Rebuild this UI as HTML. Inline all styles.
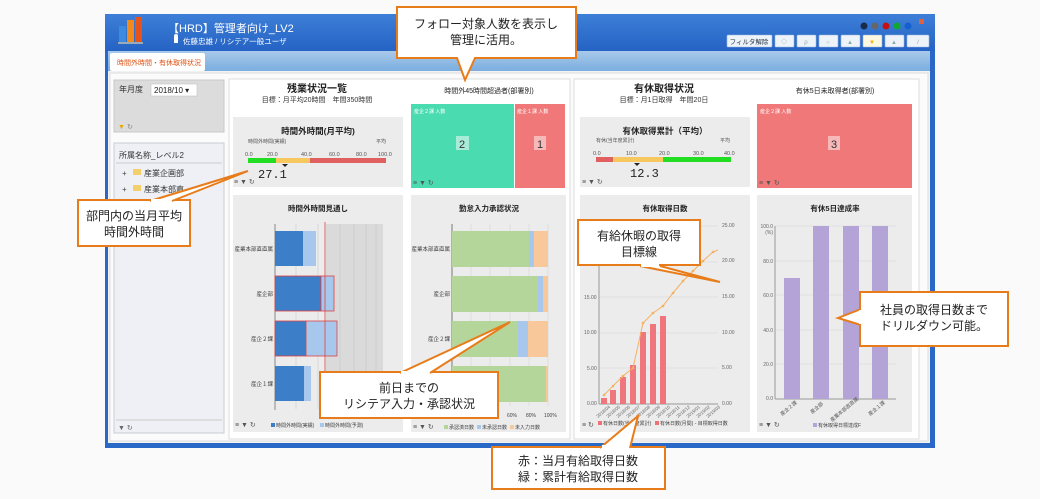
<!DOCTYPE html>
<html><head><meta charset="utf-8"><style>
html,body{margin:0;padding:0;background:#fafafa;width:1040px;height:499px;overflow:hidden}
svg{display:block;font-family:"Liberation Sans","Noto Sans CJK JP",sans-serif}
</style></head><body>
<svg width="1040" height="499" viewBox="0 0 1040 499" xmlns="http://www.w3.org/2000/svg">
<defs>
<linearGradient id="tb" x1="0" y1="0" x2="0" y2="1"><stop offset="0" stop-color="#3d7fd8"/><stop offset="1" stop-color="#2563c4"/></linearGradient>
<linearGradient id="tab" x1="0" y1="0" x2="0" y2="1"><stop offset="0" stop-color="#a9c9ea"/><stop offset="1" stop-color="#7aaedf"/></linearGradient>
</defs>
<rect width="1040" height="499" fill="#fafafa"/>
<!-- window -->
<rect x="105" y="14" width="830" height="434" fill="#2a68c8"/>
<rect x="105" y="14" width="830" height="37" fill="url(#tb)"/>
<!-- logo -->
<rect x="119" y="26" width="7" height="16" fill="#3b8be0"/>
<rect x="127" y="20" width="7" height="22" fill="#f28a1e"/>
<rect x="135" y="17" width="7" height="25" fill="#e8531a"/>
<rect x="118" y="42" width="25" height="2" fill="#9ab"/>
<text x="168" y="32" font-size="11" fill="#fff">【HRD】管理者向け_LV2</text>
<rect x="174" y="37" width="4" height="6" fill="#fff"/><circle cx="176" cy="36" r="2" fill="#fff"/>
<text x="183" y="44" font-size="7.5" fill="#fff">佐藤忠雄 / リシテア一般ユーザ</text>
<!-- dots -->
<circle cx="864" cy="26" r="3.5" fill="#1a2a4a"/>
<circle cx="875" cy="26" r="3.5" fill="#666"/>
<circle cx="886" cy="26" r="3.5" fill="#c81010"/>
<circle cx="897" cy="26" r="3.5" fill="#10a830"/>
<circle cx="908" cy="26" r="3.5" fill="#1560d0"/>
<rect x="919" y="19" width="5" height="5" fill="#e06040"/>
<!-- buttons -->
<g fill="#eef3fa" stroke="#9ab8dc" stroke-width="0.6">
<rect x="727" y="35" width="45" height="12" rx="1"/>
<rect x="775" y="35" width="19" height="12" rx="1"/>
<rect x="797" y="35" width="19" height="12" rx="1"/>
<rect x="819" y="35" width="19" height="12" rx="1"/>
<rect x="841" y="35" width="19" height="12" rx="1"/>
<rect x="863" y="35" width="19" height="12" rx="1" fill="#fff8e0"/>
<rect x="885" y="35" width="19" height="12" rx="1"/>
<rect x="907" y="35" width="22" height="12" rx="1"/>
</g>
<text x="749" y="44" font-size="6.5" fill="#234" text-anchor="middle">フィルタ解除</text>
<g fill="#8aa" font-size="6" text-anchor="middle"><text x="784" y="44">◇</text><text x="806" y="44">ρ</text><text x="828" y="44">○</text><text x="850" y="44">▲</text><text x="894" y="44">▲</text><text x="918" y="44">/</text></g>
<text x="872" y="44" font-size="6" fill="#f0b000" text-anchor="middle">▼</text>
<!-- tab strip -->
<rect x="108" y="51" width="822" height="20" fill="url(#tab)"/>
<rect x="110" y="53" width="95" height="18" fill="#fff" rx="2"/>
<text x="117" y="65" font-size="7" fill="#e05010">時間外時間・有休取得状況</text>
<!-- content bg -->
<rect x="108" y="71" width="822" height="372" fill="#f2f2f2"/>
<rect x="110" y="73" width="818" height="368" fill="#fbfbfb" stroke="#ddd"/>
<!-- left panels -->
<rect x="114" y="80" width="110" height="52" fill="#dcdcdc" stroke="#c8c8c8"/>
<text x="119" y="92" font-size="8" fill="#333">年月度</text>
<rect x="151" y="84" width="46" height="12" fill="#fff" stroke="#bbb" stroke-width="0.5"/>
<text x="154" y="93" font-size="8" fill="#222">2018/10 ▾</text>
<text x="118" y="129" font-size="7" fill="#e8a800">▼</text><text x="127" y="129" font-size="7" fill="#888">↻</text>
<rect x="114" y="143" width="110" height="290" fill="#eef0f5" stroke="#c8ccd4"/>
<text x="119" y="158" font-size="8" fill="#333">所属名称_レベル2</text>
<line x1="116" y1="163" x2="222" y2="163" stroke="#ccc"/>
<text x="122" y="176" font-size="8" fill="#444">+</text><rect x="133" y="169" width="8" height="6" fill="#f3cf6c"/><text x="144" y="176" font-size="8" fill="#333">産業企画部</text>
<text x="122" y="192" font-size="8" fill="#444">+</text><rect x="133" y="185" width="8" height="6" fill="#f3cf6c"/><text x="144" y="192" font-size="8" fill="#333">産業本部直</text>
<line x1="116" y1="420" x2="222" y2="420" stroke="#ccc"/>
<text x="118" y="430" font-size="7" fill="#666">▼ ↻</text>
<!-- main panels -->
<rect x="229" y="79" width="341" height="360" fill="#fff" stroke="#ddd"/>
<rect x="574" y="79" width="345" height="360" fill="#fff" stroke="#ddd"/>
<text x="317" y="92" font-size="10" font-weight="bold" fill="#222" text-anchor="middle">残業状況一覧</text>
<text x="317" y="102" font-size="7" fill="#333" text-anchor="middle">目標：月平均20時間　年間350時間</text>
<text x="489" y="93" font-size="7" fill="#222" text-anchor="middle">時間外45時間超過者(部署別)</text>
<text x="664" y="92" font-size="10" font-weight="bold" fill="#222" text-anchor="middle">有休取得状況</text>
<text x="664" y="102" font-size="7" fill="#333" text-anchor="middle">目標：月1日取得　年間20日</text>
<text x="835" y="93" font-size="7" fill="#222" text-anchor="middle">有休5日未取得者(部署別)</text>
<!-- gauge 1 -->
<rect x="233" y="117" width="170" height="70" fill="#ececec"/>
<text x="318" y="134" font-size="8.5" font-weight="bold" fill="#222" text-anchor="middle">時間外時間(月平均)</text>
<text x="248" y="143" font-size="5" fill="#555">時間外時間(実績)</text><text x="376" y="143" font-size="5" fill="#555">平均</text>
<g font-size="5.5" fill="#555"><text x="245" y="156">0.0</text><text x="267" y="156">20.0</text><text x="301" y="156">40.0</text><text x="329" y="156">60.0</text><text x="356" y="156">80.0</text><text x="378" y="156">100.0</text></g>
<rect x="248" y="158" width="28" height="5" fill="#22dd22"/><rect x="276" y="158" width="34" height="5" fill="#f8c860"/><rect x="310" y="158" width="76" height="5" fill="#e06060"/>
<path d="M282 164 h6 l-3 3z" fill="#222"/>
<text x="258" y="178" font-size="12" fill="#222" font-family="Liberation Mono,monospace">27.1</text>
<text x="234" y="184" font-size="7" fill="#555">≡ ▼ ↻</text>
<!-- treemap 1 -->
<rect x="411" y="104" width="103" height="84" fill="#4adbb0"/>
<rect x="515" y="104" width="50" height="84" fill="#f07878"/>
<text x="414" y="113" font-size="5" fill="#fff">産企２課 人数</text><text x="517" y="113" font-size="5" fill="#fff">産企１課 人数</text>
<rect x="456" y="136" width="13" height="14" fill="#a8ecd8"/><text x="462" y="148" font-size="11" fill="#333" text-anchor="middle">2</text>
<rect x="534" y="136" width="12" height="14" fill="#f6b8b8"/><text x="540" y="148" font-size="11" fill="#333" text-anchor="middle">1</text>
<text x="413" y="185" font-size="7" fill="#555">≡ ▼ ↻</text>
<!-- gauge 2 -->
<rect x="580" y="117" width="170" height="70" fill="#ececec"/>
<text x="665" y="134" font-size="8.5" font-weight="bold" fill="#222" text-anchor="middle">有休取得累計（平均）</text>
<text x="596" y="142" font-size="5" fill="#555">有休(当年度累計)</text><text x="720" y="142" font-size="5" fill="#555">平均</text>
<g font-size="5.5" fill="#555"><text x="593" y="155">0.0</text><text x="626" y="155">10.0</text><text x="659" y="155">20.0</text><text x="693" y="155">30.0</text><text x="724" y="155">40.0</text></g>
<rect x="596" y="157" width="17" height="5" fill="#e06060"/><rect x="613" y="157" width="50" height="5" fill="#f8c860"/><rect x="663" y="157" width="68" height="5" fill="#22dd22"/>
<path d="M634 163 h6 l-3 3z" fill="#222"/>
<text x="630" y="177" font-size="12" fill="#222" font-family="Liberation Mono,monospace">12.3</text>
<text x="582" y="184" font-size="7" fill="#555">≡ ▼ ↻</text>
<!-- treemap 2 -->
<rect x="757" y="104" width="155" height="84" fill="#f07878"/>
<text x="760" y="113" font-size="5" fill="#fff">産企２課 人数</text>
<rect x="828" y="136" width="12" height="14" fill="#f6b8b8"/><text x="834" y="148" font-size="11" fill="#333" text-anchor="middle">3</text>
<text x="759" y="185" font-size="7" fill="#555">≡ ▼ ↻</text>
<!-- lower cards -->
<rect x="233" y="195" width="170" height="237" fill="#ececec"/>
<rect x="411" y="195" width="155" height="237" fill="#ececec"/>
<rect x="580" y="195" width="170" height="237" fill="#ececec"/>
<rect x="757" y="195" width="155" height="237" fill="#ececec"/>
<!-- chart 1 -->
<text x="318" y="211" font-size="7.5" font-weight="bold" fill="#222" text-anchor="middle">時間外時間見通し</text>
<rect x="326" y="224" width="57" height="185" fill="#dadada"/>
<g stroke="#c4c4c4" stroke-width="0.5"><line x1="296" y1="224" x2="296" y2="409"/><line x1="318" y1="224" x2="318" y2="409"/><line x1="340" y1="224" x2="340" y2="409"/><line x1="354" y1="224" x2="354" y2="409"/><line x1="366" y1="224" x2="366" y2="409"/><line x1="376" y1="224" x2="376" y2="409"/></g>
<line x1="275" y1="224" x2="275" y2="410" stroke="#888"/>
<rect x="275" y="231" width="28" height="35" fill="#3d7ec8"/><rect x="303" y="231" width="13" height="35" fill="#a7c8ec"/>
<rect x="275" y="276" width="46" height="35" fill="#3d7ec8" stroke="#e04040" stroke-width="0.8"/><rect x="321" y="276" width="13" height="35" fill="#a7c8ec" stroke="#e04040" stroke-width="0.8"/>
<rect x="275" y="321" width="31" height="35" fill="#3d7ec8" stroke="#e04040" stroke-width="0.8"/><rect x="306" y="321" width="31" height="35" fill="#a7c8ec" stroke="#e04040" stroke-width="0.8"/>
<rect x="275" y="366" width="29" height="35" fill="#3d7ec8"/><rect x="304" y="366" width="7" height="35" fill="#a7c8ec"/>
<line x1="325" y1="222" x2="325" y2="410" stroke="#e04040" stroke-width="0.8"/>
<g font-size="5.5" fill="#444" text-anchor="end"><text x="273" y="251">産業本部直直属</text><text x="273" y="296">産企部</text><text x="273" y="341">産企２課</text><text x="273" y="386">産企１課</text></g>
<text x="235" y="427" font-size="7" fill="#555">≡ ▼ ↻</text>
<rect x="271" y="423" width="4" height="4" fill="#3d7ec8"/><text x="276" y="427" font-size="5" fill="#444">時間外時間(実績)</text>
<rect x="320" y="423" width="4" height="4" fill="#a7c8ec"/><text x="325" y="427" font-size="5" fill="#444">時間外時間(予測)</text>
<!-- chart 2 -->
<text x="489" y="211" font-size="7.5" font-weight="bold" fill="#222" text-anchor="middle">勤怠入力承認状況</text>
<g stroke="#d0d0d0" stroke-width="0.5"><line x1="471" y1="224" x2="471" y2="406"/><line x1="490" y1="224" x2="490" y2="406"/><line x1="510" y1="224" x2="510" y2="406"/><line x1="529" y1="224" x2="529" y2="406"/><line x1="548" y1="224" x2="548" y2="406"/></g>
<line x1="452" y1="224" x2="452" y2="406" stroke="#777"/>
<rect x="452" y="231" width="77" height="36" fill="#b5d69a"/><rect x="529" y="231" width="5" height="36" fill="#a7c8ec"/><rect x="534" y="231" width="14" height="36" fill="#f8c89a"/>
<rect x="452" y="276" width="86" height="36" fill="#b5d69a"/><rect x="538" y="276" width="5" height="36" fill="#a7c8ec"/><rect x="543" y="276" width="5" height="36" fill="#f8c89a"/>
<rect x="452" y="321" width="66" height="36" fill="#b5d69a"/><rect x="518" y="321" width="10" height="36" fill="#a7c8ec"/><rect x="528" y="321" width="20" height="36" fill="#f8c89a"/>
<rect x="452" y="366" width="95" height="36" fill="#b5d69a"/><rect x="546" y="366" width="2" height="36" fill="#f8c89a"/>
<g font-size="5.5" fill="#444" text-anchor="end"><text x="450" y="251">産業本部直直属</text><text x="450" y="296">産企部</text><text x="450" y="341">産企２課</text><text x="450" y="386">産企１課</text></g>
<g font-size="5" fill="#444"><text x="507" y="417">60%</text><text x="526" y="417">80%</text><text x="544" y="417">100%</text></g>
<text x="413" y="429" font-size="7" fill="#555">≡ ▼ ↻</text>
<rect x="444" y="425" width="4" height="4" fill="#b5d69a"/><text x="449" y="429" font-size="5" fill="#444">承認済日数</text>
<rect x="477" y="425" width="4" height="4" fill="#a7c8ec"/><text x="482" y="429" font-size="5" fill="#444">未承認日数</text>
<rect x="510" y="425" width="4" height="4" fill="#f8c89a"/><text x="515" y="429" font-size="5" fill="#444">未入力日数</text>
<!-- chart 3 -->
<text x="665" y="211" font-size="7.5" font-weight="bold" fill="#222" text-anchor="middle">有休取得日数</text>
<g stroke="#d6d6d6" stroke-width="0.5"><line x1="599" y1="226" x2="718" y2="226"/><line x1="599" y1="262" x2="718" y2="262"/><line x1="599" y1="297" x2="718" y2="297"/><line x1="599" y1="333" x2="718" y2="333"/><line x1="599" y1="368" x2="718" y2="368"/></g>
<line x1="599" y1="226" x2="599" y2="404" stroke="#999"/><line x1="599" y1="404" x2="718" y2="404" stroke="#999"/>
<g font-size="5" fill="#666"><text x="584" y="299">15.00</text><text x="584" y="334">10.00</text><text x="587" y="370">5.00</text><text x="587" y="405">0.00</text>
<text x="722" y="227">25.00</text><text x="722" y="262">20.00</text><text x="722" y="298">15.00</text><text x="722" y="334">10.00</text><text x="722" y="369">5.00</text><text x="722" y="405">0.00</text></g>
<g fill="#f07078" opacity="0.95">
<rect x="601" y="398" width="6" height="6"/><rect x="610" y="390" width="6" height="14"/><rect x="620" y="377" width="6" height="27"/><rect x="630" y="365" width="6" height="39"/><rect x="640" y="332" width="6" height="72"/><rect x="650" y="324" width="6" height="80"/><rect x="660" y="316" width="6" height="88"/>
</g>
<polyline points="604,395 613,386 623,376 633,368 643,323 653,313 663,306 673,293 683,281 693,271 703,261 713,252 718,250" fill="none" stroke="#f5b060" stroke-width="1"/>
<g fill="#f5b060"><circle cx="604" cy="395" r="1.3"/><circle cx="613" cy="386" r="1.3"/><circle cx="623" cy="376" r="1.3"/><circle cx="633" cy="368" r="1.3"/><circle cx="643" cy="323" r="1.3"/><circle cx="653" cy="313" r="1.3"/><circle cx="663" cy="306" r="1.3"/><circle cx="673" cy="293" r="1.3"/><circle cx="683" cy="281" r="1.3"/><circle cx="693" cy="271" r="1.3"/><circle cx="703" cy="261" r="1.3"/><circle cx="713" cy="252" r="1.3"/></g>
<g font-size="4.5" fill="#666"><text transform="translate(598,418) rotate(-40)">2018/04</text><text transform="translate(608,418) rotate(-40)">2018/05</text><text transform="translate(618,418) rotate(-40)">2018/06</text><text transform="translate(628,418) rotate(-40)">2018/07</text><text transform="translate(638,418) rotate(-40)">2018/08</text><text transform="translate(648,418) rotate(-40)">2018/09</text><text transform="translate(658,418) rotate(-40)">2018/10</text><text transform="translate(668,418) rotate(-40)">2018/11</text><text transform="translate(678,418) rotate(-40)">2018/12</text><text transform="translate(688,418) rotate(-40)">2019/01</text><text transform="translate(698,418) rotate(-40)">2019/02</text><text transform="translate(708,418) rotate(-40)">2019/03</text></g>
<text x="582" y="427" font-size="7" fill="#555">≡ ↻</text>
<rect x="598" y="421" width="4" height="4" fill="#f07078"/><text x="603" y="425" font-size="5" fill="#444">有休日数(当年度累計)</text>
<rect x="655" y="421" width="4" height="4" fill="#f07078"/><text x="660" y="425" font-size="5" fill="#444">有休日数(月間)  - 目標取得日数</text>
<!-- chart 4 -->
<text x="835" y="211" font-size="7.5" font-weight="bold" fill="#222" text-anchor="middle">有休5日達成率</text>
<g stroke="#d6d6d6" stroke-width="0.5"><line x1="775" y1="226" x2="896" y2="226"/><line x1="775" y1="261" x2="896" y2="261"/><line x1="775" y1="295" x2="896" y2="295"/><line x1="775" y1="330" x2="896" y2="330"/><line x1="775" y1="364" x2="896" y2="364"/></g>
<line x1="775" y1="226" x2="775" y2="399" stroke="#999"/><line x1="775" y1="399" x2="896" y2="399" stroke="#999"/>
<g font-size="5" fill="#666" text-anchor="end"><text x="773" y="228">100.0</text><text x="773" y="234">(%)</text><text x="773" y="263">80.0</text><text x="773" y="297">60.0</text><text x="773" y="332">40.0</text><text x="773" y="366">20.0</text><text x="773" y="400">0.0</text></g>
<g fill="#b3a3d6"><rect x="784" y="278" width="16" height="121"/><rect x="813" y="226" width="16" height="173"/><rect x="843" y="226" width="16" height="173"/><rect x="872" y="226" width="16" height="173"/></g>
<g font-size="5" fill="#555"><text transform="translate(782,416) rotate(-40)">産企２課</text><text transform="translate(812,414) rotate(-40)">産企部</text><text transform="translate(832,422) rotate(-40)">産業本部直直属</text><text transform="translate(870,416) rotate(-40)">産企１課</text></g>
<text x="759" y="427" font-size="7" fill="#555">≡ ▼ ↻</text>
<rect x="813" y="423" width="4" height="4" fill="#b3a3d6"/><text x="818" y="427" font-size="5" fill="#444">有休取得日標達成F</text>
<!-- callouts -->
<g fill="#fff" stroke="#e87c1a" stroke-width="2" stroke-linejoin="miter">
<path d="M397 7 H576 V58 H475 L465 80 L457 58 H397 Z"/>
<path d="M78 200 H190 V246 H78 Z"/>
<path d="M320 372 H498 V418 H320 Z"/>
<path d="M578 220 H700 V265 H578 Z"/>
<path d="M860 292 H1008 V346 H860 Z"/>
<path d="M492 447 H665 V489 H492 Z"/>
</g>
<!-- tails -->
<g fill="#fff" stroke="#e87c1a" stroke-width="2">
<path d="M150 201 L248 171 L172 201"/>
<path d="M400 373 L510 322 L430 373"/>
<path d="M640 266 L720 282 L660 266"/>
<path d="M861 309 L838 318 L861 325"/>
<path d="M600 448 L638 416 L630 448"/>
</g>
<g fill="#fff"><rect x="151" y="199" width="20" height="4"/><rect x="401" y="371" width="28" height="4"/><rect x="641" y="263" width="18" height="4"/><rect x="859" y="310" width="4" height="14"/><rect x="602" y="445" width="27" height="4"/></g>
<g font-size="12" fill="#222" text-anchor="middle">
<text x="486" y="28">フォロー対象人数を表示し</text><text x="486" y="44">管理に活用。</text>
<text x="134" y="220">部門内の当月平均</text><text x="134" y="236">時間外時間</text>
<text x="409" y="392">前日までの</text><text x="409" y="408">リシテア入力・承認状況</text>
<text x="639" y="240">有給休暇の取得</text><text x="639" y="256">目標線</text>
<text x="934" y="314">社員の取得日数まで</text><text x="934" y="330">ドリルダウン可能。</text>
<text x="578" y="465">赤：当月有給取得日数</text><text x="578" y="481">緑：累計有給取得日数</text>
</g>
</svg>
</body></html>
